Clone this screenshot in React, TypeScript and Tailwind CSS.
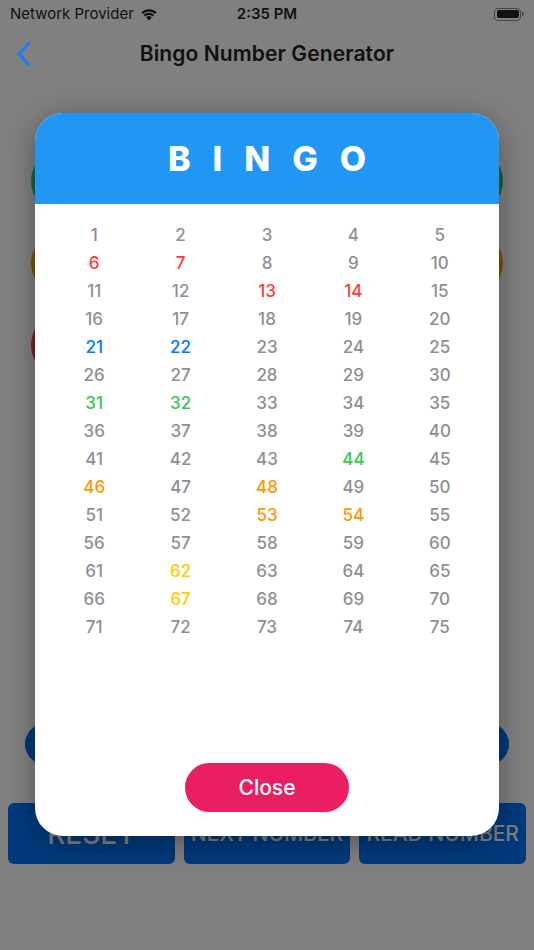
import React from 'react';

const RED = [6, 7, 13, 14];
const BLUE = [21, 22];
const GREEN = [31, 32, 44];
const ORANGE = [46, 48, 53, 54];
const YELLOW = [62, 67];

const numberColor = (n: number) => {
  if (RED.includes(n)) return 'text-[#ff3b30]';
  if (BLUE.includes(n)) return 'text-[#007aff]';
  if (GREEN.includes(n)) return 'text-[#34c759]';
  if (ORANGE.includes(n)) return 'text-[#ff9500]';
  if (YELLOW.includes(n)) return 'text-[#ffcc00]';
  return 'text-[#8e8e93]';
};

const numbers = Array.from({ length: 75 }, (_, i) => i + 1);

function StatusBar() {
  return (
    <div className="relative h-[28px] flex items-center px-[10px] text-[15px] text-[#111]">
      <div className="flex items-center gap-[6px]">
        <span>Network Provider</span>
        <svg width="18" height="13" viewBox="0 0 18 13">
          <path d="M9 12.5 L6.2 9.4 A4 4 0 0 1 11.8 9.4 Z" fill="#111" />
          <path d="M3.8 6.9 A7.4 7.4 0 0 1 14.2 6.9 L12.6 8.6 A5.1 5.1 0 0 0 5.4 8.6 Z" fill="#111" />
          <path d="M1.3 4.3 A11 11 0 0 1 16.7 4.3 L15.1 6 A8.7 8.7 0 0 0 2.9 6 Z" fill="#111" />
        </svg>
      </div>
      <span className="absolute left-1/2 -translate-x-1/2 font-semibold">2:35 PM</span>
      <div className="ml-auto flex items-center gap-[1px]">
        <div className="w-[27px] h-[13px] rounded-[4px] border border-[#444] p-[1.5px]">
          <div className="w-full h-full rounded-[2px] bg-[#111]" />
        </div>
        <div className="w-[2px] h-[4px] rounded-r-sm bg-[#444]" />
      </div>
    </div>
  );
}

function NavBar() {
  return (
    <div className="relative h-[52px] flex items-center justify-center">
      <svg className="absolute left-[16px] top-[13px]" width="16" height="26" viewBox="0 0 16 26">
        <path d="M13 2 L3 13 L13 24" fill="none" stroke="#1a7ff5" strokeWidth="3" strokeLinecap="round" strokeLinejoin="round" />
      </svg>
      <h1 className="text-[21px] font-semibold text-[#111] tracking-[0.1px]">Bingo Number Generator</h1>
    </div>
  );
}

function BackgroundContent() {
  return (
    <div className="flex flex-col">
      <div className="mt-[67px] flex flex-col gap-[14px] px-[31px]">
        <div className="flex justify-between">
          {[0, 1, 2, 3, 4, 5].map((i) => (
            <div key={i} className="w-[68px] h-[68px] rounded-full bg-[#1a6530]" />
          ))}
        </div>
        <div className="flex justify-between">
          {[0, 1, 2, 3, 4, 5].map((i) => (
            <div key={i} className="w-[68px] h-[68px] rounded-full bg-[#7f5000]" />
          ))}
        </div>
        <div className="flex gap-[14px]">
          {[0, 1, 2].map((i) => (
            <div key={i} className="w-[68px] h-[68px] rounded-full bg-[#801d18]" />
          ))}
        </div>
      </div>
      <div className="mt-[344px] mx-[25px] h-[42px] rounded-full bg-[#003a7c] flex items-center justify-end pr-[12px]">
        <span className="text-[20px] text-[#6d7f98]">NUMBERS</span>
      </div>
      <div className="mt-[38px] px-[8px] grid grid-cols-3 gap-[9px]">
        {['RESET', 'NEXT NUMBER', 'READ NUMBER'].map((label, i) => (
          <div
            key={label}
            className="h-[61px] rounded-[6px] bg-[#003a7c] flex items-center justify-center"
          >
            <span className={`${i === 0 ? 'text-[28px]' : 'text-[21px]'} font-medium text-[#808080] whitespace-nowrap`}>
              {label}
            </span>
          </div>
        ))}
      </div>
    </div>
  );
}

function BingoModal() {
  return (
    <div className="absolute left-[35px] top-[113px] w-[464px] h-[723px] rounded-[28px] bg-white overflow-hidden flex flex-col shadow-[0_6px_30px_rgba(0,0,0,0.35)]">
      <div className="h-[91px] bg-[#2196f3] flex items-center justify-center">
        <span className="text-[34px] font-extrabold text-white tracking-[22px] pl-[22px]">BINGO</span>
      </div>
      <div className="px-4 pt-[18px] grid grid-cols-5">
        {numbers.map((n) => (
          <div key={n} className={`h-[28px] flex items-center justify-center text-[17px] font-medium ${numberColor(n)}`}>
            {n}
          </div>
        ))}
      </div>
      <div className="mt-auto mb-[24px] flex justify-center">
        <button className="w-[164px] h-[49px] rounded-full bg-[#e91e63] text-white text-[21px] font-medium">
          Close
        </button>
      </div>
    </div>
  );
}

export default function App() {
  return (
    <div className="relative w-[534px] h-[950px] overflow-hidden bg-[#808080] font-['Inter',sans-serif]">
      <StatusBar />
      <NavBar />
      <BackgroundContent />
      <BingoModal />
    </div>
  );
}
